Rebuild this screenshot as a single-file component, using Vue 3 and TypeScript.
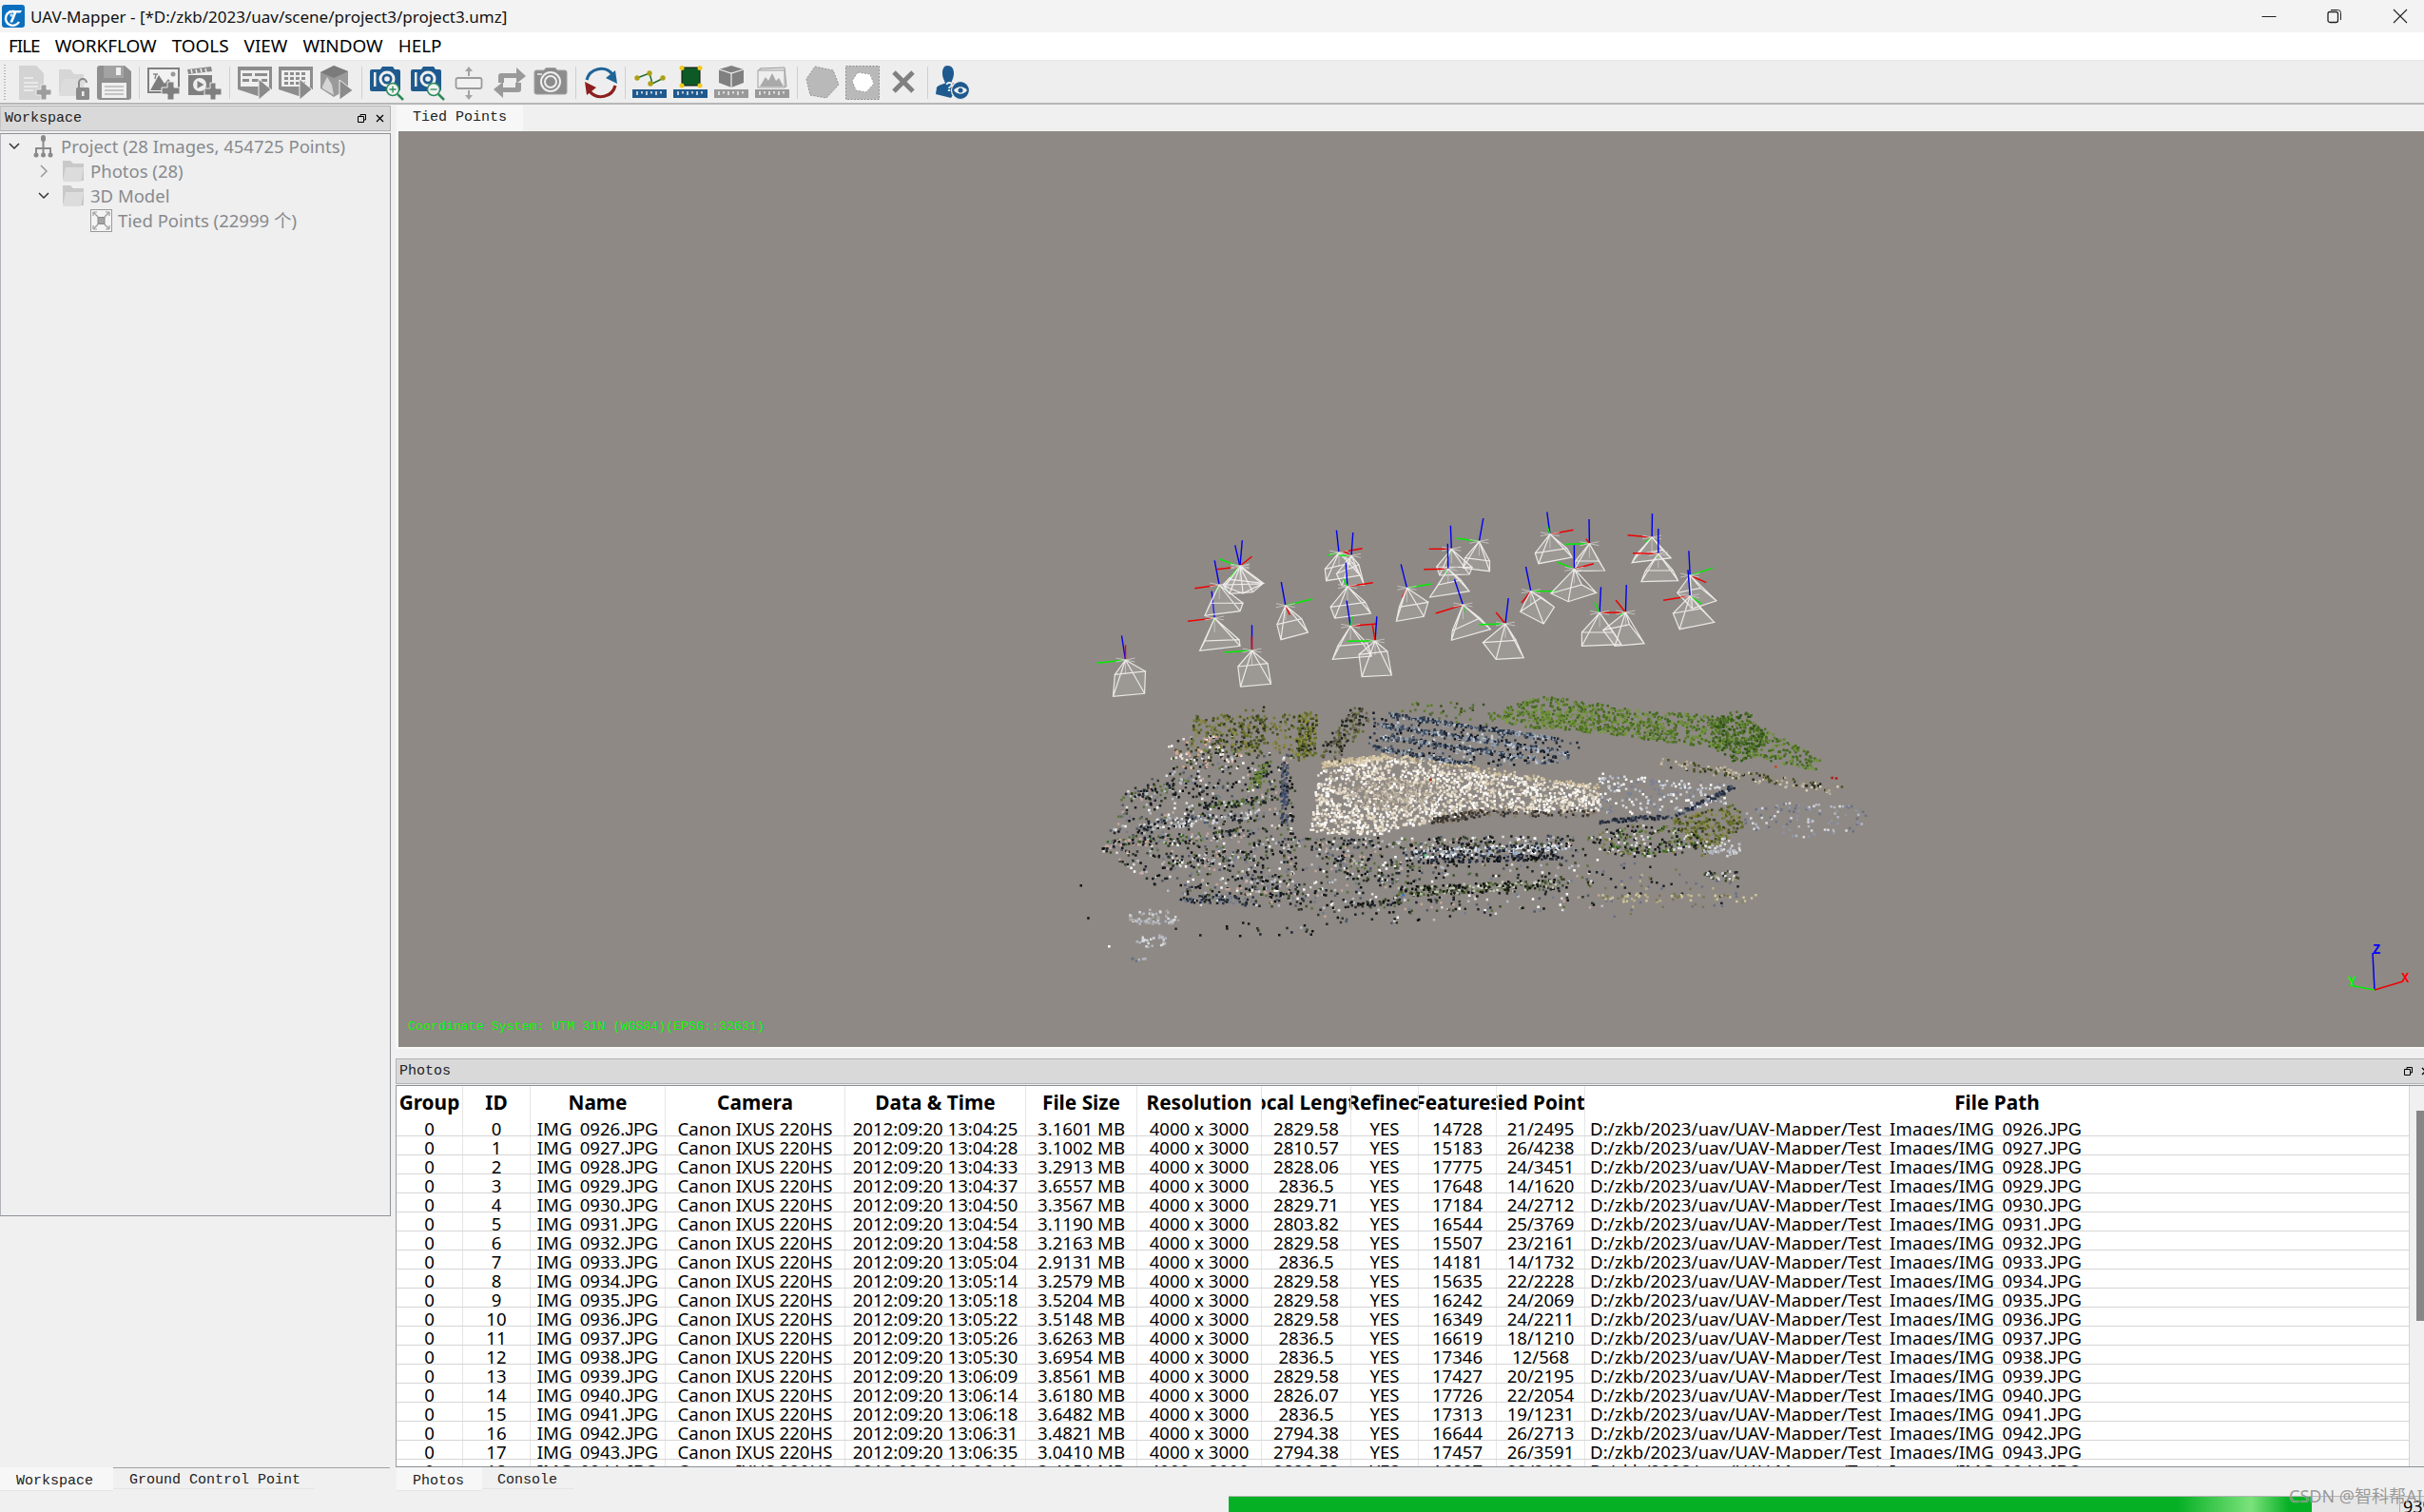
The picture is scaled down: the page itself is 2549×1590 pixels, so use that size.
<script setup lang="ts">
type P = [number, number]

const menus = ['FILE', 'WORKFLOW', 'TOOLS', 'VIEW', 'WINDOW', 'HELP']
const headers = ['Group', 'ID', 'Name', 'Camera', 'Data & Time', 'File Size', 'Resolution', 'Focal Length', 'Refined', 'Features', 'Tied Points', 'File Path']

const raw = [
  '0926|13:04:25|3.1601|2829.58|14728|21/2495',
  '0927|13:04:28|3.1002|2810.57|15183|26/4238',
  '0928|13:04:33|3.2913|2828.06|17775|24/3451',
  '0929|13:04:37|3.6557|2836.5|17648|14/1620',
  '0930|13:04:50|3.3567|2829.71|17184|24/2712',
  '0931|13:04:54|3.1190|2803.82|16544|25/3769',
  '0932|13:04:58|3.2163|2829.58|15507|23/2161',
  '0933|13:05:04|2.9131|2836.5|14181|14/1732',
  '0934|13:05:14|3.2579|2829.58|15635|22/2228',
  '0935|13:05:18|3.5204|2829.58|16242|24/2069',
  '0936|13:05:22|3.5148|2829.58|16349|24/2211',
  '0937|13:05:26|3.6263|2836.5|16619|18/1210',
  '0938|13:05:30|3.6954|2836.5|17346|12/568',
  '0939|13:06:09|3.8561|2829.58|17427|20/2195',
  '0940|13:06:14|3.6180|2826.07|17726|22/2054',
  '0941|13:06:18|3.6482|2836.5|17313|19/1231',
  '0942|13:06:31|3.4821|2794.38|16644|26/2713',
  '0943|13:06:35|3.0410|2794.38|17457|26/3591',
  '0944|13:06:40|3.4051|2829.58|16807|22/2422',
]
const rows = raw.map((line, i) => {
  const [n, t, size, focal, feat, tied] = line.split('|')
  const name = `IMG_${n}.JPG`
  return ['0', String(i), name, 'Canon IXUS 220HS', `2012:09:20 ${t}`, `${size} MB`, '4000 x 3000', focal, 'YES', feat, tied, `D:/zkb/2023/uav/UAV-Mapper/Test_Images/${name}`]
})
const isFile = (j: number) => j === 2 || j === 11

/* ---------- point cloud, sampled from a seeded generator ---------- */
let seed = 20230915
function rnd(): number {
  seed = (seed + 0x6d2b79f5) | 0
  let t = Math.imul(seed ^ (seed >>> 15), 1 | seed)
  t = (t + Math.imul(t ^ (t >>> 7), 61 | t)) ^ t
  return ((t ^ (t >>> 14)) >>> 0) / 4294967296
}
const buckets = new Map<string, string[]>()
function dot(x: number, y: number, pal: string[]) {
  const c = pal[Math.floor(rnd() * pal.length)]
  const sx = 1130 + x / 1.823
  const sy = 720 + y / 3
  if (!buckets.has(c)) buckets.set(c, [])
  buckets.get(c)!.push(`M${sx.toFixed(1)} ${sy.toFixed(1)}h2.5v2.5h-2.5z`)
}
function inside(p: P, poly: P[]) {
  let hit = false
  for (let i = 0, j = poly.length - 1; i < poly.length; j = i++) {
    const [xi, yi] = poly[i]
    const [xj, yj] = poly[j]
    if (yi > p[1] !== yj > p[1] && p[0] < ((xj - xi) * (p[1] - yi)) / (yj - yi) + xi) hit = !hit
  }
  return hit
}
function area(poly: P[], n: number, pal: string[]) {
  const xs = poly.map((p) => p[0])
  const ys = poly.map((p) => p[1])
  const x0 = Math.min(...xs), x1 = Math.max(...xs), y0 = Math.min(...ys), y1 = Math.max(...ys)
  let c = 0, guard = 0
  while (c < n && guard < n * 30) {
    guard++
    const p: P = [x0 + rnd() * (x1 - x0), y0 + rnd() * (y1 - y0)]
    if (inside(p, poly)) { dot(p[0], p[1], pal); c++ }
  }
}
function blob(cx: number, cy: number, rx: number, ry: number, n: number, pal: string[]) {
  for (let i = 0; i < n; i++) {
    const a = rnd() * Math.PI * 2
    const d = Math.sqrt(rnd())
    dot(cx + Math.cos(a) * d * rx, cy + Math.sin(a) * d * ry, pal)
  }
}
function streak(pts: P[], n: number, jx: number, jy: number, pal: string[]) {
  for (let i = 0; i < n; i++) {
    const u = rnd() * (pts.length - 1)
    const k = Math.min(Math.floor(u), pts.length - 2)
    const f = u - k
    const x = pts[k][0] + (pts[k + 1][0] - pts[k][0]) * f + (rnd() - 0.5) * jx
    const y = pts[k][1] + (pts[k + 1][1] - pts[k][1]) * f + (rnd() - 0.5) * jy
    dot(x, y, pal)
  }
}
const tan = ['#f3ecdf', '#e9e0cf', '#ffffff', '#dcd0bb', '#cfc3ae', '#f7f3ea']
const sand = ['#b3a897', '#a89d8d', '#c2b8a8', '#968c80']
const green = ['#5b7d2a', '#4d7023', '#6e8f3a', '#3f6420', '#7a9a48', '#4a6a25']
const cars = ['#1c2636', '#2e3c50', '#46566a', '#8d9aaa', '#c5ced6', '#111722']
const dark = ['#15181a', '#23271f', '#2e3526', '#3d4a2a', '#0e0f10', '#1c2230']
const olive = ['#5f6b2b', '#6e7a2f', '#4b5522', '#7f7a35', '#3a4420', '#8a8a45']
const mixed = [...dark, '#b9bdc5', '#dddddd', '#737c8e', '#4e5667', '#c3a79b', '#59703a', '#ffffff']
const grayblue = ['#b4b8c2', '#8e94a6', '#d6d9df', '#6a7084']

area([[465, 270], [570, 220], [720, 260], [1000, 320], [1010, 400], [780, 400], [680, 430], [580, 470], [450, 465]], 1700, tan)
blob(610, 345, 90, 50, 220, sand)
streak([[680, 430], [780, 400], [1000, 405]], 160, 12, 24, ['#3a3530', '#5b5245', '#8a7a66', '#2a2a2a'])
streak([[470, 250], [600, 222], [1000, 320]], 220, 14, 18, ['#d9c9a8', '#e8dcc2', '#c9b894'])
area([[570, 85], [960, 170], [975, 240], [750, 255], [560, 205]], 260, cars)
streak([[600, 90], [920, 170]], 170, 16, 14, cars)
streak([[590, 125], [950, 215]], 180, 16, 14, cars)
streak([[590, 160], [910, 240]], 170, 16, 14, cars)
streak([[570, 195], [750, 245]], 90, 16, 14, cars)
area([[780, 100], [890, 30], [1100, 80], [1280, 100], [1430, 230], [1420, 270], [1200, 190], [1000, 150], [860, 130]], 1150, green)
blob(1270, 160, 50, 80, 170, ['#3f6420', '#2f5418', '#4d7023'])
blob(930, 90, 60, 40, 60, ['#7a9a48', '#6e8f3a'])
streak([[660, 60], [800, 100]], 40, 100, 50, ['#5b7d2a', '#59703a', '#3f4f24'])
/* left side: trees, then loose rows of mixed points rather than one round mass */
area([[230, 90], [420, 90], [420, 210], [210, 210]], 240, olive)
streak([[340, 95], [330, 220]], 60, 50, 70, ['#2a2f1a', '#5f6b2b', '#46502a'])
streak([[445, 95], [440, 225]], 170, 36, 24, ['#6e7a2f', '#4b5522', '#8a8a35', '#5f6b2b', '#2a2f1a'])
streak([[550, 80], [480, 230]], 130, 50, 40, ['#6d6650', '#4d4a3a', '#5f6b2b', '#1f2320'])
area([[170, 170], [300, 150], [330, 260], [190, 260]], 110, ['#f0e4dc', '#d9a78e', '#2a2a2a', '#ffffff', '#46502a'])
area([[100, 330], [250, 210], [420, 210], [425, 700], [210, 690], [50, 520]], 800, mixed)
streak([[240, 380], [370, 360]], 70, 20, 24, ['#3f6420', '#59703a', '#1c2128'])
streak([[100, 350], [230, 300]], 60, 30, 30, ['#1c2128', '#59703a', '#b9bdc5'])
streak([[120, 440], [340, 410]], 120, 20, 30, ['#b9bdc5', '#4e5667', '#1c2128', '#ddd'])
streak([[60, 500], [330, 465]], 130, 20, 30, ['#737c8e', '#1c2128', '#3f6420', '#c3a79b'])
streak([[170, 560], [340, 530]], 80, 20, 40, mixed)
streak([[340, 320], [370, 240]], 60, 24, 24, ['#55722c', '#1c2128', '#6c8a3a'])
streak([[400, 250], [400, 440]], 80, 14, 20, ['#3a4a68', '#1c2128', '#565c70'])
streak([[310, 620], [460, 660]], 90, 50, 60, mixed)
streak([[410, 500], [960, 490]], 240, 30, 36, mixed)
streak([[640, 530], [940, 510]], 220, 20, 30, ['#ffffff', '#dfe6ee', '#a5b5c8', '#15181a', '#2a3447'])
streak([[660, 550], [930, 540]], 120, 16, 20, ['#0e0f10', '#1c2230', '#2a3447'])
streak([[620, 650], [930, 625]], 230, 30, 30, ['#1a1e14', '#3d4a2a', '#59703a', '#0e0f10', '#bfc6b0'])
area([[420, 520], [1000, 510], [1010, 700], [430, 770]], 420, mixed)
streak([[480, 560], [640, 600]], 110, 60, 70, mixed)
streak([[210, 670], [340, 680]], 60, 30, 30, ['#2a3447', '#1c2128', '#737c8e'])
streak([[520, 690], [620, 680]], 40, 20, 20, dark)
area([[1000, 270], [1250, 310], [1250, 370], [1100, 410], [1000, 400]], 190, ['#b9bfcb', '#d6d9df', '#ffffff', '#7a8094'])
streak([[1000, 430], [1150, 410], [1260, 320]], 130, 8, 14, ['#2a3447', '#1c2230', '#46566a'])
streak([[1130, 240], [1460, 330]], 170, 24, 30, ['#b8ac96', '#8f8a75', '#4a5226', '#2a2f1a', '#d8cdb8'])
area([[1140, 420], [1270, 370], [1280, 450], [1200, 540]], 260, olive)
blob(1240, 510, 40, 30, 50, ['#b4b8c2', '#d6d9df'])
blob(1090, 490, 110, 50, 220, ['#15181a', '#2e3526', '#3d6a22', '#777a40', '#ddd'])
area([[1000, 560], [1250, 560], [1300, 690], [1020, 730]], 70, ['#7b7650', '#1c2128', '#6a7084', '#b9b08a'])
streak([[1010, 670], [1300, 670]], 55, 20, 22, ['#b9b08a', '#7b7650', '#cfc79a'])
blob(1400, 420, 120, 60, 100, grayblue)
blob(1240, 600, 40, 16, 30, ['#1c2128', '#d6d9df', '#3d4a2a'])
blob(150, 730, 50, 28, 60, ['#b4b8c2', '#d6d9df', '#a7a49e'])
blob(145, 805, 30, 22, 25, ['#b4b8c2', '#d6d9df'])
blob(120, 862, 14, 8, 6, ['#6a7084', '#b4b8c2'])
blob(330, 770, 140, 30, 18, dark)
dot(680, 296, ['#9a3010']); dot(1342, 255, ['#d04020']); dot(1450, 290, ['#b01818']); dot(1458, 292, ['#b01818'])
dot(628, 660, ['#2a78c8']); dot(670, 535, ['#5fd888']); dot(10, 630, ['#111111']); dot(24, 733, ['#111111']); dot(64, 822, ['#ffffff'])

const cloud = [...buckets.entries()].map(([color, segs]) => ({ color, d: segs.join('') }))

/* ---------- camera frusta ---------- */
const sx = (x: number) => +(1150 + x / 2.24).toFixed(1)
const sy = (y: number) => +(520 + y / 3).toFixed(1)
const pt = (p: P) => `${sx(p[0])} ${sy(p[1])}`
type Cam = { a: P; b: P[]; bl: P; r: P; g: P }
const camData: Cam[] = [
  { a: [75, 522], b: [[50, 568], [122, 558], [120, 628], [46, 637]], bl: [66, 445], r: [75, 475], g: [8, 532] },
  { a: [373, 492], b: [[340, 543], [410, 533], [418, 598], [346, 606]], bl: [373, 412], r: [372, 448], g: [308, 498] },
  { a: [285, 390], b: [[262, 462], [343, 458], [345, 478], [250, 493]], bl: [278, 305], r: [222, 400], g: [285, 402] },
  { a: [296, 285], b: [[275, 342], [352, 343], [345, 368], [262, 382]], bl: [285, 208], r: [238, 296], g: [288, 305] },
  { a: [345, 228], b: [[305, 285], [398, 282], [375, 308], [320, 313]], bl: [333, 160], r: [290, 236], g: [297, 204] },
  { a: [345, 225], b: [[322, 268], [400, 280], [352, 312], [308, 290]], bl: [350, 145], r: [373, 196], g: [322, 262] },
  { a: [452, 350], b: [[432, 410], [490, 392], [505, 435], [441, 458]], bl: [442, 276], r: [462, 380], g: [515, 330] },
  { a: [578, 183], b: [[545, 235], [610, 215], [628, 255], [548, 272]], bl: [572, 113], r: [633, 170], g: [552, 192] },
  { a: [607, 193], b: [[572, 250], [625, 222], [637, 285], [585, 288]], bl: [611, 120], r: [590, 180], g: [580, 192] },
  { a: [598, 290], b: [[558, 355], [640, 340], [653, 375], [568, 390]], bl: [594, 215], r: [658, 278], g: [588, 265] },
  { a: [605, 415], b: [[575, 478], [645, 470], [655, 510], [563, 520]], bl: [596, 335], r: [668, 408], g: [610, 385] },
  { a: [663, 462], b: [[625, 505], [692, 495], [702, 570], [632, 575]], bl: [667, 385], r: [657, 412], g: [597, 463] },
  { a: [738, 295], b: [[720, 355], [788, 340], [778, 385], [713, 400]], bl: [724, 220], r: [727, 325], g: [797, 282] },
  { a: [843, 172], b: [[808, 228], [892, 230], [885, 252], [815, 255]], bl: [841, 98], r: [790, 172], g: [835, 195] },
  { a: [835, 235], b: [[812, 285], [865, 270], [885, 305], [792, 324]], bl: [834, 155], r: [778, 236], g: [830, 250] },
  { a: [908, 148], b: [[875, 200], [933, 210], [933, 242], [870, 232]], bl: [918, 75], r: [908, 150], g: [855, 138] },
  { a: [870, 348], b: [[845, 430], [910, 390], [935, 425], [843, 460]], bl: [850, 268], r: [806, 375], g: [872, 370] },
  { a: [970, 408], b: [[917, 467], [995, 460], [1013, 515], [948, 520]], bl: [977, 327], r: [948, 372], g: [908, 410] },
  { a: [1030, 305], b: [[1005, 370], [1055, 325], [1085, 355], [1060, 408]], bl: [1018, 228], r: [1008, 342], g: [1090, 305] },
  { a: [1075, 125], b: [[1040, 185], [1115, 170], [1127, 198], [1048, 218]], bl: [1068, 55], r: [1130, 112], g: [1068, 98] },
  { a: [1168, 155], b: [[1135, 210], [1190, 210], [1204, 240], [1130, 242]], bl: [1167, 78], r: [1160, 140], g: [1110, 157] },
  { a: [1132, 235], b: [[1077, 312], [1150, 285], [1184, 310], [1118, 338]], bl: [1132, 160], r: [1178, 218], g: [1092, 213] },
  { a: [1192, 373], b: [[1150, 435], [1225, 435], [1243, 473], [1150, 478]], bl: [1195, 292], r: [1255, 372], g: [1180, 340] },
  { a: [1253, 372], b: [[1200, 428], [1262, 410], [1297, 470], [1228, 478]], bl: [1255, 285], r: [1230, 333], g: [1240, 380] },
  { a: [1315, 135], b: [[1278, 190], [1340, 175], [1360, 200], [1268, 215]], bl: [1316, 60], r: [1258, 128], g: [1300, 150] },
  { a: [1330, 187], b: [[1300, 240], [1365, 240], [1377, 272], [1290, 275]], bl: [1330, 108], r: [1270, 185], g: [1328, 200] },
  { a: [1405, 255], b: [[1375, 310], [1430, 295], [1467, 335], [1410, 360]], bl: [1402, 178], r: [1443, 278], g: [1458, 232] },
  { a: [1405, 320], b: [[1365, 375], [1430, 360], [1462, 403], [1380, 425]], bl: [1400, 238], r: [1342, 334], g: [1432, 345] },
]
const cams = camData.map((c) => {
  const q = c.b.map(pt)
  const ax = sx(c.a[0]), ay = sy(c.a[1])
  const [b0, b1, b2, b3] = c.b
  return {
    fill: `M${pt(c.a)}L${pt(b2)}L${pt(b3)}Z M${pt(c.a)}L${pt(b1)}L${pt(b2)}Z M${pt(c.a)}L${pt(b0)}L${pt(b3)}Z`,
    wire: `M${q[0]}L${q[1]}L${q[2]}L${q[3]}Z` + q.map((s) => `M${pt(c.a)}L${s}`).join(''),
    star: `M${ax - 10} ${ay - 2}L${ax + 10} ${ay + 2}M${ax - 10} ${ay + 2}L${ax + 10} ${ay - 2}M${ax} ${ay}L${ax} ${ay + 15}`,
    blue: `M${pt(c.a)}L${pt(c.bl)}`,
    red: `M${pt(c.a)}L${pt(c.r)}`,
    green: `M${pt(c.a)}L${pt(c.g)}`,
  }
})
</script>

<template>
  <div class="app">
    <header class="titlebar">
      <svg class="logo" viewBox="0 0 24 24">
        <rect width="24" height="24" rx="3" fill="#0b6fbe" />
        <path d="M13 7a7.5 7.5 0 1 0 5 11" fill="none" stroke="#fff" stroke-width="2.4" />
        <path d="M8 6h13l-1.5 2.5h-4.2l-4 10H8.400l4-10H7z" fill="#fff" />
        <circle cx="10" cy="11" r="1.700" fill="#bfe3ff" />
      </svg>
      <span class="title-text">UAV-Mapper - [*D:/zkb/2023/uav/scene/project3/project3.umz]</span>
      <div class="win-btns">
        <svg width="16" height="16" viewBox="0 0 16 16"><path d="M0.500 8.500h15" stroke="#222" stroke-width="1" /></svg>
        <svg width="16" height="16" viewBox="0 0 16 16"><rect x="1" y="3.500" width="10.500" height="11" rx="2" fill="none" stroke="#222" stroke-width="1.300" /><path d="M4 1.500h7.500a3 3 0 0 1 3 3V12" fill="none" stroke="#222" stroke-width="1" /></svg>
        <svg width="16" height="16" viewBox="0 0 16 16"><path d="M1 1l14 14M15 1L1 15" stroke="#222" stroke-width="1.100" /></svg>
      </div>
    </header>

    <nav class="menubar">
      <span v-for="m in menus" :key="m" class="menu-item">{{ m }}</span>
    </nav>

    <div class="toolbar">
      <span class="grip"></span>
      <div class="tb-group g6 first">
        <svg class="ic" viewBox="0 0 36 36"><path d="M2 0h18l8 8v28H2z" fill="#d3d3d3" /><path d="M7 13h10M7 18h15M7 22h15M7 26h10" stroke="#f1f1f1" stroke-width="1.500" /><path d="M25 20h6v5h5v6h-5v5h-6v-5h-5v-6h5z" fill="#9d9d9d" stroke="#eee" /></svg>
        <svg class="ic" viewBox="0 0 36 36"><path d="M2 4h12l4 5h10v10H16v13H6L2 28z" fill="#d6d6d6" /><path d="M6 14h24l-4 18H2z" fill="#dcdcdc" /><rect x="20" y="23" width="14" height="13" rx="1.500" fill="#8a8a8a" /><path d="M23 23v-5a4 4 0 0 1 8 0" fill="none" stroke="#8a8a8a" stroke-width="2" /><rect x="26" y="27" width="2.500" height="5" fill="#eee" /></svg>
        <svg class="ic" viewBox="0 0 36 36"><path d="M3 0h26l7 6v27a3 3 0 0 1-3 3H3a3 3 0 0 1-3-3V3a3 3 0 0 1 3-3z" fill="#8f8f8f" /><rect x="7" y="0" width="21" height="13" fill="#a3a3a3" /><rect x="20" y="2" width="5" height="8" fill="#efefef" /><rect x="5" y="18" width="26" height="16" fill="#efefef" /><path d="M8 22h20M8 26h20M8 30h20" stroke="#9a9a9a" stroke-width="1" /></svg>
      </div>
      <span class="sep"></span>
      <div class="tb-group g6">
        <svg class="ic" viewBox="0 0 36 36"><rect x="1" y="3" width="32" height="25" fill="#f2f2f2" stroke="#7f7f7f" stroke-width="2" /><path d="M3 26l9-16 6 9 4-5 9 12z" fill="#7c7c7c" /><path d="M8 14l1-5M6 9h5" stroke="#888" stroke-width="1.500" /><circle cx="27" cy="9" r="2.500" fill="#999" /><path d="M21 20h7v6h6v7h-6v6h-7v-6h-6v-7h6z" transform="translate(0 -3)" fill="#7f7f7f" stroke="#eee" /></svg>
        <svg class="ic" viewBox="0 0 36 36"><path d="M0 4l25-3 1 5-25 3z" fill="#8a8a8a" /><path d="M4 4l1 4M9 4l1 4M14 3l1 4M19 3l1 4" stroke="#eee" stroke-width="1.500" /><rect x="1" y="10" width="25" height="21" fill="#7f7f7f" /><circle cx="13" cy="20" r="7" fill="#eee" /><path d="M10.500 16v8l7-4z" fill="#7f7f7f" /><path d="M24 18h6v6h6v7h-6v5h-6v-5h-6v-7h6z" fill="#7f7f7f" stroke="#eee" /></svg>
      </div>
      <span class="sep"></span>
      <div class="tb-group g7">
        <svg class="ic" viewBox="0 0 36 36"><path d="M0 1h36v24H24l0 8L0 25z" fill="#8d8d8d" /><rect x="3" y="5" width="30" height="17" fill="#efefef" /><path d="M5 8h10v3H5zM18 8h13v3H18zM5 14h7v3H5zM15 14h7v3h-7zM25 14h6v3h-6z" fill="#8d8d8d" /><path d="M22 14l13 11-13 11z" fill="#8a8a8a" stroke="#eee" /></svg>
        <svg class="ic" viewBox="0 0 36 36"><path d="M0 1h36v24H24v8L0 25z" fill="#8d8d8d" /><rect x="3" y="5" width="30" height="17" fill="#efefef" /><path d="M6 7h4v3H6zM12 7h4v3h-4zM18 7h4v3h-4zM24 7h4v3h-4zM6 12h4v3H6zM12 12h4v3h-4zM18 12h4v3h-4zM24 12h4v3h-4zM6 17h4v3H6zM12 17h4v3h-4zM18 17h4v3h-4zM24 17h4v3h-4z" fill="#8d8d8d" /><path d="M22 14l13 11-13 11z" fill="#8a8a8a" stroke="#eee" /></svg>
        <svg class="ic" viewBox="0 0 36 36"><path d="M15 0l15 6v18l-15 9L1 24V7z" fill="#9a9a9a" /><path d="M1 7l14 6 15-7-15-6z" fill="#7b7b7b" /><path d="M3 22l5-10 5 8 2 11-12-7z" fill="#d5d5d5" /><path d="M21 15l14 11-14 10z" fill="#8a8a8a" stroke="#eee" /></svg>
      </div>
      <span class="sep"></span>
      <div class="tb-group g7">
        <svg class="ic" viewBox="0 0 36 36"><path d="M6 4h5l2-3h11l2 3h4a2 2 0 0 1 2 2v19a2 2 0 0 1-2 2H2a2 2 0 0 1-2-2V6a2 2 0 0 1 2-2z" fill="#1f5a8f" /><rect x="4" y="7" width="2.500" height="15" fill="#eee" /><circle cx="18" cy="14" r="8.500" fill="#efefef" /><circle cx="18" cy="14" r="5.500" fill="#1f5a8f" /><circle cx="18" cy="14" r="2.800" fill="#efefef" /><circle cx="24" cy="25" r="6.500" fill="#f3f3f3" stroke="#2b8a5a" stroke-width="1.500" /><path d="M24 21.500v7M20.500 25h7" stroke="#2b8a5a" stroke-width="1.300" /><path d="M29 30l6 6" stroke="#2b8a5a" stroke-width="2.500" /></svg>
        <svg class="ic" viewBox="0 0 36 36"><path d="M6 4h5l2-3h11l2 3h4a2 2 0 0 1 2 2v19a2 2 0 0 1-2 2H2a2 2 0 0 1-2-2V6a2 2 0 0 1 2-2z" fill="#1f5a8f" /><rect x="4" y="7" width="2.500" height="15" fill="#eee" /><circle cx="18" cy="14" r="8.500" fill="#efefef" /><circle cx="18" cy="14" r="5.500" fill="#1f5a8f" /><circle cx="18" cy="14" r="2.800" fill="#efefef" /><circle cx="24" cy="25" r="6.500" fill="#f3f3f3" stroke="#2b8a5a" stroke-width="1.500" /><path d="M20.500 25h7" stroke="#2b8a5a" stroke-width="1.300" /><path d="M29 30l6 6" stroke="#2b8a5a" stroke-width="2.500" /></svg>
        <svg class="ic" viewBox="0 0 36 36"><rect x="4.500" y="13" width="27" height="11" rx="2" fill="#f1f1f1" stroke="#9c9c9c" stroke-width="1.800" /><path d="M18 1l4 5h-3v5h-2V6h-3zM18 36l4-5h-3v-5h-2v5h-3z" fill="#a3a3a3" /></svg>
        <svg class="ic" viewBox="0 0 36 36"><path d="M6 18v-7a3 3 0 0 1 3-3h16V2l10 9-10 8v-6H12v5zM30 18v7a3 3 0 0 1-3 3H11v6L1 25l10-8v6h13v-5z" fill="#9a9a9a" /></svg>
        <svg class="ic" viewBox="0 0 36 36"><path d="M3 5h8l2-2.500h10L25 5h8a2 2 0 0 1 2 2v21a2 2 0 0 1-2 2H3a2 2 0 0 1-2-2V7a2 2 0 0 1 2-2z" fill="#8c8c8c" stroke="#a0a0a0" /><circle cx="18" cy="17" r="10" fill="#8c8c8c" stroke="#efefef" stroke-width="2" /><circle cx="18" cy="17" r="6" fill="#8c8c8c" stroke="#efefef" stroke-width="2" /><path d="M4 9h5" stroke="#efefef" stroke-width="1.500" /></svg>
      </div>
      <span class="sep"></span>
      <div class="tb-group">
        <svg class="ic" viewBox="0 0 36 36"><path d="M3 15A15.500 15.500 0 0 1 30 9" fill="none" stroke="#1f6497" stroke-width="3.200" /><path d="M35 19L23 13l10-8z" fill="#1f6497" /><path d="M33 21A15.500 15.500 0 0 1 6 27" fill="none" stroke="#8c1f1f" stroke-width="3.200" /><path d="M1 17l12 6-10 8z" fill="#8c1f1f" /></svg>
      </div>
      <span class="sep narrow"></span>
      <div class="tb-group g7">
        <svg class="ic" viewBox="0 0 36 36"><path d="M5 13l13-5 3 11 12-6" fill="none" stroke="#1f6b2b" stroke-width="1.500" /><circle cx="5" cy="13" r="2.700" fill="#aca012" /><circle cx="18" cy="8" r="2.700" fill="#aca012" /><circle cx="19" cy="19" r="2.700" fill="#aca012" /><circle cx="32" cy="13" r="2.700" fill="#aca012" /><rect y="25" width="36" height="9" fill="#1f5a8f" /><path d="M5 27v4M10 27v2.500M15 27v4M20 27v2.500M25 27v4M30 27v2.500" stroke="#eee" stroke-width="1.500" /></svg>
        <svg class="ic" viewBox="0 0 36 36"><rect x="9" y="2" width="19" height="19" fill="#0e5a26" stroke="#111" /><circle cx="9" cy="2.500" r="2.500" fill="#f2c81e" /><circle cx="28" cy="2.500" r="2.500" fill="#f2c81e" /><circle cx="9" cy="21" r="2.500" fill="#f2c81e" /><circle cx="28" cy="21" r="2.500" fill="#f2c81e" /><rect y="25" width="36" height="9" fill="#1f5a8f" /><path d="M5 27v4M10 27v2.500M15 27v4M20 27v2.500M25 27v4M30 27v2.500" stroke="#eee" stroke-width="1.500" /></svg>
        <svg class="ic" viewBox="0 0 36 36"><path d="M18 0l13 4v14l-13 5-13-5V4z" fill="#808080" /><path d="M5 4l13 4 13-4" fill="none" stroke="#eee" stroke-width="1.200" /><path d="M18 8v15" stroke="#eee" stroke-width="1.200" /><rect y="25" width="36" height="9" fill="#999" /><path d="M5 27v4M10 27v2.500M15 27v4M20 27v2.500M25 27v4M30 27v2.500" stroke="#eee" stroke-width="1.500" /></svg>
        <svg class="ic" viewBox="0 0 36 36"><path d="M5 3l26-1 2 20H4z" fill="#e5e5e5" stroke="#999" /><rect x="3" y="5" width="28" height="18" fill="#eee" stroke="#a0a0a0" /><path d="M5 22l6-10 3 4 4-8 4 8 3-3 5 9z" fill="#a9a9a9" /><rect y="25" width="36" height="9" fill="#999" /><path d="M5 27v4M10 27v2.500M15 27v4M20 27v2.500M25 27v4M30 27v2.500" stroke="#eee" stroke-width="1.500" /></svg>
      </div>
      <span class="sep"></span>
      <div class="tb-group g7b">
        <svg class="ic" viewBox="0 0 36 36"><path d="M10 1l19 4 6 15-13 14-17-3L1 14z" fill="#b9b9b9" stroke="#8f8f8f" stroke-dasharray="2 1.500" /></svg>
        <svg class="ic" viewBox="0 0 36 36"><rect x="0.500" y="0.500" width="35" height="35" fill="#b9b9b9" stroke="#8f8f8f" stroke-dasharray="2 1.500" /><path d="M13 7l13 2 4 10-8 9-11-2-4-10z" fill="#fff" stroke="#999" stroke-dasharray="2 1.500" /></svg>
        <svg class="ic" viewBox="0 0 36 36"><path d="M9 7l20 20M29 7L9 27" stroke="#808080" stroke-width="5" /></svg>
      </div>
      <span class="sep"></span>
      <div class="tb-group">
        <svg class="ic" viewBox="0 0 36 36"><path d="M12 0c5 0 7 3 7 8s-2 7-2.500 10c5 1 7 2 7.500 4l-8 12L0 30l1-7c1-2 5-3 9-4.500C9 15 7 13 7 8s2-8 5-8z" fill="#1f5a8f" /><text x="10" y="27" class="q">?</text><circle cx="26" cy="26" r="9.500" fill="#1f5a8f" stroke="#efefef" stroke-width="1.200" /><path d="M19 26c4-5 10-5 14 0-4 5-10 5-14 0z" fill="#efefef" /><circle cx="26" cy="26" r="2.500" fill="#1f5a8f" /></svg>
      </div>
    </div>

    <main class="main">
      <section class="left">
        <div class="dock-title">
          <span class="mono">Workspace</span>
          <div class="dock-btns">
            <svg width="9" height="9" viewBox="0 0 9 9"><path d="M3 2V.5h5.500V6H6.500M.5 2.500H6.500V8.500H.5z" fill="none" stroke="#000" /></svg>
            <svg width="9" height="9" viewBox="0 0 9 9"><path d="M1 1l7 7M8 1L1 8" stroke="#000" stroke-width="1.300" /></svg>
          </div>
        </div>
        <div class="tree">
          <div class="tree-row l0">
            <svg class="caret" viewBox="0 0 12 8"><path d="M1 1l5 5 5-5" fill="none" stroke="#333" stroke-width="1.500" /></svg>
            <svg class="node" viewBox="0 0 22 24"><rect x="8" y="0" width="5" height="7" rx="2.500" fill="#8a8a8a" /><path d="M10.500 6v6M3 20v-6h15v6M10.500 12v8" fill="none" stroke="#8a8a8a" stroke-width="2" /><circle cx="3" cy="21" r="2.500" fill="#8a8a8a" /><circle cx="10.500" cy="21" r="2.500" fill="#8a8a8a" /><circle cx="18" cy="21" r="2.500" fill="#8a8a8a" /></svg>
            <span>Project (28 Images, 454725 Points)</span>
          </div>
          <div class="tree-row l1">
            <svg class="caret" viewBox="0 0 12 14"><path d="M3 1l6 6-6 6" fill="none" stroke="#999" stroke-width="1.500" /></svg>
            <svg class="node" viewBox="0 0 22 24"><path d="M0 1h8l3 3h11v18H4L0 20z" fill="#c9c9c9" /><path d="M3 8h19l-3 15H0z" fill="#dcdcdc" /></svg>
            <span>Photos (28)</span>
          </div>
          <div class="tree-row l1">
            <svg class="caret" viewBox="0 0 12 8"><path d="M1 1l5 5 5-5" fill="none" stroke="#333" stroke-width="1.500" /></svg>
            <svg class="node" viewBox="0 0 22 24"><path d="M0 1h8l3 3h11v18H4L0 20z" fill="#c9c9c9" /><path d="M3 8h19l-3 15H0z" fill="#dcdcdc" /></svg>
            <span>3D Model</span>
          </div>
          <div class="tree-row l2">
            <svg class="node leaf" viewBox="0 0 23 24"><rect x="0.500" y="0.500" width="22" height="23" fill="#f4f4f4" stroke="#9a9a9a" /><rect x="8" y="8.500" width="7" height="7" fill="#a5a5a5" stroke="#888" /><path d="M3 3h4M3 3v4M20 3h-4M20 3v4M3 21h4M3 21v-4M20 21h-4M20 21v-4M4 4l4 4M19 4l-4 4M4 20l4-4M19 20l-4-4" stroke="#999" stroke-width="1.200" fill="none" /></svg>
            <span>Tied Points (22999 个)</span>
          </div>
        </div>
        <div class="left-fill"></div>
        <div class="tabs">
          <span class="tab on"><span class="mono">Workspace</span></span>
          <span class="tab off wide"><span class="mono">Ground Control Point</span></span>
          <span class="tab-rest"></span>
        </div>
      </section>

      <section class="right">
        <div class="top-tabs"><span class="tied-tab mono">Tied Points</span></div>
        <div class="view-frame">
          <div class="viewport">
            <svg class="scene" viewBox="419 138 2130 963" width="2130" height="963">
              <path v-for="c in cloud" :key="c.color" :d="c.d" :fill="c.color" />
              <g v-for="(c, i) in cams" :key="i" fill="none">
                <path :d="c.fill" fill="#ffffff" fill-opacity="0.13" />
                <path :d="c.blue" stroke="#0000ee" stroke-width="1.400" />
                <path :d="c.red" stroke="#ee0000" stroke-width="1.400" />
                <path :d="c.green" stroke="#00ee00" stroke-width="1.400" />
                <path :d="c.star" stroke="#c4c1be" stroke-width="1" />
                <path :d="c.wire" stroke="#f1f0ee" stroke-width="1.200" stroke-opacity="0.92" />
              </g>
              <path d="M2497 1041L2495 1002" stroke="#0000ee" stroke-width="1.500" />
              <path d="M2497 1041L2527 1032" stroke="#ee0000" stroke-width="1.500" />
              <path d="M2497 1041L2470 1036" stroke="#00ee00" stroke-width="1.500" />
              <text x="2495" y="1003" class="axis" fill="#0000ff">Z</text>
              <text x="2525" y="1033" class="axis" fill="#ff0000">X</text>
              <text x="2469" y="1037" class="axis" fill="#00ff00">Y</text>
            </svg>
            <span class="coord mono">Coordinate System: UTM 31N (WGS84)(EPSG::32631)</span>
          </div>
        </div>
        <div class="dock-title photos-title">
          <span class="mono">Photos</span>
          <div class="dock-btns">
            <svg width="9" height="9" viewBox="0 0 9 9"><path d="M3 2V.5h5.500V6H6.500M.5 2.500H6.500V8.500H.5z" fill="none" stroke="#000" /></svg>
            <svg width="9" height="9" viewBox="0 0 9 9"><path d="M1 1l7 7M8 1L1 8" stroke="#000" stroke-width="1.300" /></svg>
          </div>
        </div>
        <div class="table-wrap">
          <div class="table">
            <div class="row head">
              <div v-for="h in headers" :key="h" class="cell"><span>{{ h }}</span></div>
            </div>
            <div v-for="(r, i) in rows" :key="i" class="row">
              <div v-for="(v, j) in r" :key="j" class="cell" :class="{ path: j === 11 }"><span>{{ isFile(j) ? v.slice(0, -3) : v }}<span v-if="isFile(j)" class="ext">JPG</span></span></div>
            </div>
          </div>
          <div class="scroll"><div class="thumb"></div></div>
        </div>
        <div class="tabs">
          <span class="tab on photos"><span class="mono">Photos</span></span>
          <span class="tab off console"><span class="mono">Console</span></span>
        </div>
      </section>
    </main>

    <footer class="status">
      <div class="progress">
        <div class="fill"></div>
        <span class="pct">93%</span>
      </div>
      <span class="mark">CSDN @智科帮AI</span>
    </footer>
  </div>
</template>

<style>
html, body { margin: 0; background: #f0f0f0; }
</style>

<style scoped>
.app {
  width: 2549px; height: 1590px; overflow: hidden; display: flex; flex-direction: column;
  background: #f0f0f0; color: #000; font-family: "Noto Sans", "Noto Sans CJK SC", sans-serif; position: relative;
}
.mono { font-family: "Liberation Mono", "DejaVu Sans Mono", monospace; font-size: 15px; color: #222; white-space: pre; }

.titlebar { height: 34px; flex: none; display: flex; align-items: center; background: #f3f3f3; padding-left: 2px; position: relative; }
.logo { width: 24px; height: 24px; flex: none; }
.title-text { margin-left: 6px; font-size: 17px; white-space: nowrap; color: #111; }
.win-btns { margin-left: auto; display: flex; gap: 53px; padding-right: 17px; align-items: center; }

.menubar { height: 29px; flex: none; background: #fff; display: flex; align-items: center; gap: 16px; padding-left: 9px; border-bottom: 1px solid #e6e6e6; box-sizing: content-box; }
.menu-item { font-size: 18.900px; color: #000; line-height: 29px; }
.menu-item:first-child { letter-spacing: -1px; }

.toolbar { height: 46px; flex: none; box-sizing: border-box; display: flex; align-items: center; background: #eeeeee; border-bottom: 2px solid #b7b7b7; position: relative; padding: 2px 0 0 4px; }
.grip { width: 2px; height: 38px; flex: none; background: repeating-linear-gradient(#b4b4b4 0 1px, transparent 1px 3px); }
.tb-group { display: flex; align-items: center; }
.tb-group.first { margin-left: 12px; }
.g6 { gap: 6px; }
.g7 { gap: 7px; }
.g7b { gap: 6px; }
.ic { width: 36px; height: 36px; flex: none; display: block; overflow: visible; }
.q { font: bold 14px "Liberation Sans", sans-serif; fill: #efefef; }
.sep { width: 1px; height: 34px; flex: none; background: #cfcfcf; margin: 0 8px; }
.sep.narrow { margin: 0 7px; }

.main { flex: 1; min-height: 0; display: flex; }
.left { width: 416px; flex: none; display: flex; flex-direction: column; padding-top: 1px; box-sizing: border-box; }
.right { flex: 1; min-width: 0; display: flex; flex-direction: column; padding-top: 1px; }

.dock-title { height: 27px; flex: none; box-sizing: border-box; width: 411px; display: flex; align-items: center; background: #d9d9d9; border: 1px solid #b3b3b3; border-left-color: #c4c4c4; padding-left: 4px; }
.dock-btns { margin-left: auto; display: flex; gap: 10px; padding-right: 6px; }
.tree { margin-top: 2px; height: 1139px; width: 411px; flex: none; box-sizing: border-box; border: 1px solid #8d9196; border-left-color: #b0b4b8; font-size: 18.500px; color: #878a8e; background: #efefef; }
.tree-row { height: 26px; display: flex; align-items: center; white-space: nowrap; line-height: 26px; }
.l0 { padding-left: 8px; }
.l1 { padding-left: 39px; }
.l2 { padding-left: 94px; }
.caret { width: 12px; height: 14px; flex: none; margin-right: 14px; }
.node { width: 22px; height: 24px; flex: none; margin-right: 7px; }
.node.leaf { width: 23px; margin-right: 6px; }
.left-fill { flex: 1; }

.tabs { height: 25px; flex: none; display: flex; align-items: stretch; }
.tab { display: flex; align-items: center; box-sizing: border-box; padding: 4px 0 0 17px; }
.tab.on { background: #f7f7f7; width: 119px; border-bottom: 1px solid #e4e4e4; }
.tab.off { height: 23px; border-top: 1px solid #a0a0a0; border-bottom: 1px solid #e4e4e4; background: #f0f0f0; }
.tab.wide { width: 212px; }
.tab-rest { width: 79px; height: 1px; background: #a0a0a0; }
.tab.photos { margin-left: 1px; width: 90px; }
.tab.console { width: 96px; border-top: none; padding-left: 16px; }

.top-tabs { height: 27px; flex: none; display: flex; padding-left: 1px; }
.tied-tab { width: 133px; box-sizing: border-box; background: #f7f7f7; display: flex; align-items: center; padding: 0 0 2px 17px; }
.view-frame { height: 965px; flex: none; box-sizing: border-box; background: #f7f7f7; padding-left: 3px; padding-bottom: 2px; }
.viewport { height: 963px; background: #8e8985; position: relative; overflow: hidden; }
.scene { display: block; position: absolute; left: 0; top: 0; }
.axis { font: bold 14px "Liberation Mono", monospace; }
.coord { position: absolute; left: 10px; top: 934px; font-size: 13.300px; color: #00ff00; }

.photos-title { margin-top: 10px; width: auto; border-left-color: #b3b3b3; padding-left: 3px; overflow: hidden; border-right: none; }
.photos-title .dock-btns { margin-left: auto; padding-right: 0; margin-right: -6px; gap: 9px; }

.table-wrap { margin-top: 1px; height: 402px; flex: none; display: flex; border-top: 1px solid #8a8f94; border-bottom: 1px solid #8a8f94; box-sizing: border-box; border-left: 1px solid #9a9ea2; }
.table { flex: 1; min-width: 0; background: #fff; overflow: hidden; }
.row { display: grid; grid-template-columns: 70px 71px 142px 189px 190px 117px 131px 94px 71px 82px 93px 1fr; height: 20px; box-sizing: border-box; border-bottom: 1px solid #d6d6d6; }
.row.head { height: 33px; border-bottom: none; font-weight: bold; }
.cell { border-right: 1px solid #e6e6e6; display: flex; justify-content: center; overflow: hidden; white-space: nowrap; font-size: 18.600px; line-height: 20px; padding-top: 2px; box-sizing: border-box; height: 19px; }
.cell span { flex: none; }
.cell .ext { font-family: "Liberation Sans", sans-serif; font-size: 18px; }
.head .cell { font-size: 20.800px; height: 33px; line-height: 33px; padding-top: 1px; }
.cell.path { justify-content: flex-start; padding-left: 5px; border-right: none; letter-spacing: 0.14px; }
.head .cell:last-child { border-right: none; }
.scroll { width: 16px; flex: none; background: #f0f0f0; border-left: 1px solid #d4d4d4; box-sizing: border-box; padding-top: 26px; padding-left: 7px; }
.thumb { height: 221px; background: #868686; }

.status { height: 22px; flex: none; display: flex; align-items: flex-end; position: relative; padding-left: 1292px; }
.progress { width: 1257px; height: 17px; box-sizing: border-box; display: flex; background: #e6e6e6; border-top: 1px solid #b5b5b5; overflow: hidden; }
.fill { width: 1139px; flex: none; background: linear-gradient(90deg, #06b025 0, #06b025 998px, #7be27b 1075px, #06b025 1115px); }
.pct { margin-left: 92px; padding-left: 3px; border-left: 1px solid #b0b0b0; font-size: 18px; line-height: 20px; white-space: nowrap; }
.mark { position: absolute; left: 2407px; top: -9px; font-size: 18px; color: #8a8a8a; opacity: 0.85; white-space: nowrap; text-shadow: 0 0 1px #fff; }
</style>
